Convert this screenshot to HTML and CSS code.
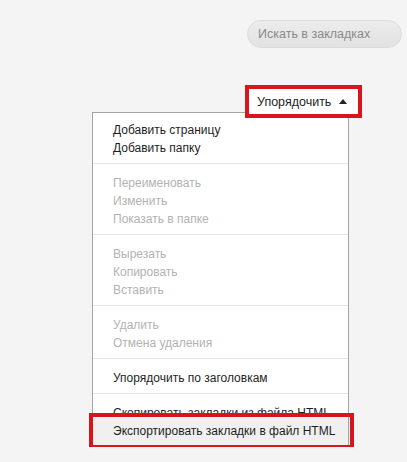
FILE: index.html
```html
<!DOCTYPE html>
<html lang="ru">
<head>
  <meta charset="UTF-8">
  <title>Закладки</title>
  <link rel="stylesheet" href="styles.css">
</head>
<body>

  <div class="page">
    <div class="search-row">
      <input class="search" type="text" placeholder="Искать в закладках">
    </div>

    <div class="sort">
      <button class="sort-btn marked">
        <span>Упорядочить</span>
        <svg width="8" height="5" viewBox="0 0 8 5"><path d="M0 5 L4 0 L8 5 Z" fill="#222"/></svg>
      </button>

      <div class="menu">
        <div class="group">
          <div class="item">Добавить страницу</div>
          <div class="item">Добавить папку</div>
        </div>
        <div class="group">
          <div class="item disabled">Переименовать</div>
          <div class="item disabled">Изменить</div>
          <div class="item disabled">Показать в папке</div>
        </div>
        <div class="group">
          <div class="item disabled">Вырезать</div>
          <div class="item disabled">Копировать</div>
          <div class="item disabled">Вставить</div>
        </div>
        <div class="group">
          <div class="item disabled">Удалить</div>
          <div class="item disabled">Отмена удаления</div>
        </div>
        <div class="group">
          <div class="item">Упорядочить по заголовкам</div>
        </div>
        <div class="group">
          <div class="item">Скопировать закладки из файла HTML</div>
          <div class="item hover marked">Экспортировать закладки в файл HTML</div>
        </div>
      </div>
    </div>
  </div>

</body>
</html>
```

FILE: styles.css
```css
body {
  margin: 0;
  background: #f4f4f4;
  font-family: "Liberation Sans", Arial, sans-serif;
  font-size: 12px;
  color: #1e1e1e;
}

.page {
  padding-top: 20px;
}

.search-row {
  display: flex;
  justify-content: flex-end;
  padding-right: 5px;
}

.search {
  box-sizing: border-box;
  width: 155px;
  height: 28px;
  padding: 0 10px;
  border: 1px solid #dcdcdc;
  border-radius: 14px;
  background: linear-gradient(#ececec, #e2e2e2);
  font-family: inherit;
  font-size: 12.5px;
  color: #333;
  outline: none;
}

.search::placeholder {
  color: #8a8a8a;
}

.sort {
  display: flex;
  flex-direction: column;
  width: 266px;
  margin: 41px 0 0 92px;
}

.sort-btn {
  position: relative;
  z-index: 1;
  align-self: flex-end;
  display: flex;
  align-items: center;
  justify-content: space-between;
  box-sizing: border-box;
  width: 109px;
  height: 25px;
  margin-bottom: -2px;
  padding: 0 11px 0 8px;
  border: 0;
  background: #fff;
  font-family: inherit;
  font-size: 12.5px;
  color: #1e1e1e;
  cursor: pointer;
}

.sort-btn svg {
  margin-top: -1px;
}

.menu {
  width: 257px;
  box-sizing: border-box;
  border: 1px solid #a3a3a3;
  background: #fff;
}

.group {
  padding: 10px 0 6px;
  border-top: 1px solid #e6e6e6;
}

.group:first-child {
  padding-top: 8px;
  border-top: 0;
}

.item {
  position: relative;
  padding-left: 20px;
  line-height: 18px;
  white-space: nowrap;
}

.item.disabled {
  color: #b2b2b2;
}

.item.hover {
  margin: -5px 0;
  padding-top: 5px;
  padding-bottom: 5px;
  background: #f0f0f0;
}

/* red frames drawn over the highlighted controls */
.marked::after {
  content: "";
  position: absolute;
  inset: -4px;
  border: 4px solid #d8141e;
  pointer-events: none;
}

.item.marked::after {
  inset: -4px -6px -4px -4px;
}
```
